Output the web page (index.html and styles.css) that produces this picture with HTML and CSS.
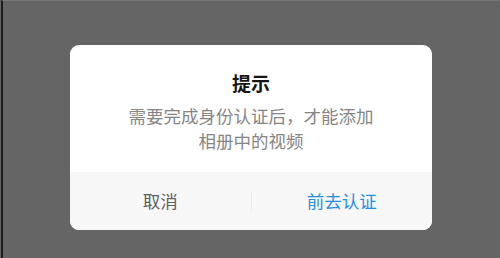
FILE: index.html
```html
<!DOCTYPE html>
<html lang="zh-CN">
<head>
<meta charset="utf-8">
<title>提示</title>
<link rel="stylesheet" href="styles.css">
</head>
<body>
<div class="screen">
  <div class="dialog">
    <div class="dialog-body">
      <div class="dialog-title">提示</div>
      <div class="dialog-msg">需要完成身份认证后，才能添加相册中的视频</div>
    </div>
    <div class="dialog-footer">
      <div class="btn btn-cancel">取消</div>
      <div class="divider"></div>
      <div class="btn btn-ok">前去认证</div>
    </div>
  </div>
</div>
</body>
</html>
```
FILE: styles.css
```css
html, body {
  margin: 0;
  padding: 0;
  width: 500px;
  height: 258px;
  overflow: hidden;
  background: #656565;
  font-family: "Noto Sans CJK SC", "Noto Sans", sans-serif;
}
.screen {
  box-sizing: border-box;
  width: 500px;
  height: 258px;
  margin-left: 1px;
  border-left: 2px solid #1c1c1c;
  border-top: 1px solid #777;
  padding-top: 44px;
  padding-left: 67px;
}
.dialog {
  width: 362px;
  height: 185px;
  background: #fff;
  border-radius: 9px;
  overflow: hidden;
  display: flex;
  flex-direction: column;
}
.dialog-body {
  height: 127px;
  box-sizing: border-box;
  padding: 25px 50px 0;
  text-align: center;
}
.dialog-title {
  font-size: 19px;
  line-height: 26px;
  font-weight: 700;
  color: #151515;
}
.dialog-msg {
  margin-top: 7px;
  font-size: 17.5px;
  line-height: 25px;
  color: #858585;
}
.dialog-footer {
  flex: 1;
  background: #f7f7f7;
  display: flex;
  align-items: center;
}
.btn {
  flex: 1;
  text-align: center;
  font-size: 17.5px;
  line-height: 24px;
  padding-bottom: 1px;
}
.btn-cancel {
  color: #5f5f5f;
}
.btn-ok {
  color: #1f90df;
}
.divider {
  width: 1px;
  height: 20px;
  background: #ececec;
}
```
